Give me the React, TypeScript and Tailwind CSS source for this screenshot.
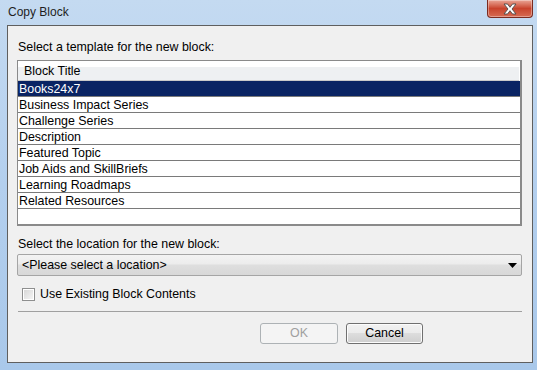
import React, { useState } from "react";

const templates = [
  "Books24x7",
  "Business Impact Series",
  "Challenge Series",
  "Description",
  "Featured Topic",
  "Job Aids and SkillBriefs",
  "Learning Roadmaps",
  "Related Resources",
];

function CloseButton() {
  return (
    <div className="w-[46px] h-[18px] rounded-b-[4px] border border-t-0 border-[#7b2b20] bg-gradient-to-b from-[#e9a596] via-[#c8432c] to-[#d66a52] flex items-center justify-center shadow-[inset_0_0_0_1px_rgba(255,255,255,0.35)]">
      <svg width="16" height="12" viewBox="0 0 16 12">
        <path
          d="M2 1h3.5L8 4.3 10.5 1H14l-4 5 4 5h-3.5L8 7.7 5.5 11H2l4-5z"
          fill="#ffffff"
          stroke="#4a4a4a"
          strokeWidth="0.9"
          strokeLinejoin="round"
        />
      </svg>
    </div>
  );
}

export default function App() {
  const [selected, setSelected] = useState(0);
  const [useExisting, setUseExisting] = useState(false);

  return (
    <div className="w-[537px] h-[370px] flex flex-col pl-[7px] pr-[4px] pb-[7px] bg-gradient-to-b from-[#c4daf1] via-[#b3cfee] to-[#a9c8ea] font-['Liberation_Sans',Arial,sans-serif] text-[12.4px] text-black select-none">
      {/* Title bar */}
      <div className="h-[25px] shrink-0 flex items-start justify-between">
        <div className="pl-[1px] pt-[4px] leading-[16px] text-[12px] text-[#1e1e1e]">Copy Block</div>
        <CloseButton />
      </div>

      {/* Client area */}
      <div className="flex-1 flex flex-col border border-[#5f5f5f] bg-[#f0f0f0] pl-[9px] pr-[10px] pt-[12px]">
        <div className="pl-[1px] h-[16px] leading-[16px] pt-[1px]">Select a template for the new block:</div>

        {/* Table */}
        <div className="mt-[6px] h-[166px] flex flex-col border-l border-t border-r-2 border-b-2 border-[#8a8a8a] bg-white">
          <div className="h-[20px] shrink-0 flex items-center pl-[6px] pt-[2px] border-b border-[#c9c9c9] bg-gradient-to-b from-white from-30% to-[#eef0f2] to-30% mr-[1px]">
            Block Title
          </div>
          {templates.map((t, i) => (
            <div
              key={t}
              onClick={() => setSelected(i)}
              className={
                i === selected
                  ? "h-[16px] shrink-0 flex items-center pl-[1px] pt-[1px] border-b border-[#7a7a7a] bg-[#0a2463] text-white"
                  : "h-[16px] shrink-0 flex items-center pl-[1px] pt-[1px] border-b border-[#7a7a7a]"
              }
            >
              {t}
            </div>
          ))}
          <div className="flex-1" />
        </div>

        <div className="mt-[9px] pl-[1px] h-[16px] leading-[16px] pt-[1px]">Select the location for the new block:</div>

        {/* Combo box */}
        <div className="mt-[3px] h-[22px] flex items-center justify-between pl-[4px] pr-[4px] border border-[#a5a5a5] rounded-[2px] bg-[linear-gradient(to_bottom,#f3f3f3_0%,#ececec_45%,#dedede_50%,#d8d8d8_100%)]">
          <span>&lt;Please select a location&gt;</span>
          <svg width="9" height="5" viewBox="0 0 9 5">
            <path d="M0 0h9L4.5 5z" fill="#000" />
          </svg>
        </div>

        {/* Checkbox */}
        <div
          className="mt-[10px] h-[16px] flex items-center pl-[5px] gap-[5px]"
          onClick={() => setUseExisting(!useExisting)}
        >
          <div className="w-[13px] h-[13px] border border-[#8e8f8f] bg-white p-[1px]">
            <div className="w-full h-full bg-gradient-to-br from-[#d8d8d8] to-[#f4f4f4] flex items-center justify-center text-[10px] leading-none">
              {useExisting ? "✓" : ""}
            </div>
          </div>
          <span className="pt-[1px]">Use Existing Block Contents</span>
        </div>

        {/* Separator */}
        <div className="mt-[9px] ml-[1px] h-px bg-[#a0a0a0]" />

        {/* Buttons */}
        <div className="mt-[11px] flex pl-[243px] gap-[8px]">
          <button className="w-[78px] h-[21px] rounded-[3px] border border-[#adb2b5] bg-[#f4f4f4] text-[#a0a0a0] text-[12.4px]">
            OK
          </button>
          <button className="w-[77px] h-[21px] rounded-[3px] border border-[#707070] bg-[linear-gradient(to_bottom,#f2f2f2_0%,#ebebeb_50%,#dddddd_50%,#cfcfcf_100%)] text-[12.4px] shadow-[inset_0_0_0_1px_#fcfcfc]">
            Cancel
          </button>
        </div>
      </div>
    </div>
  );
}
